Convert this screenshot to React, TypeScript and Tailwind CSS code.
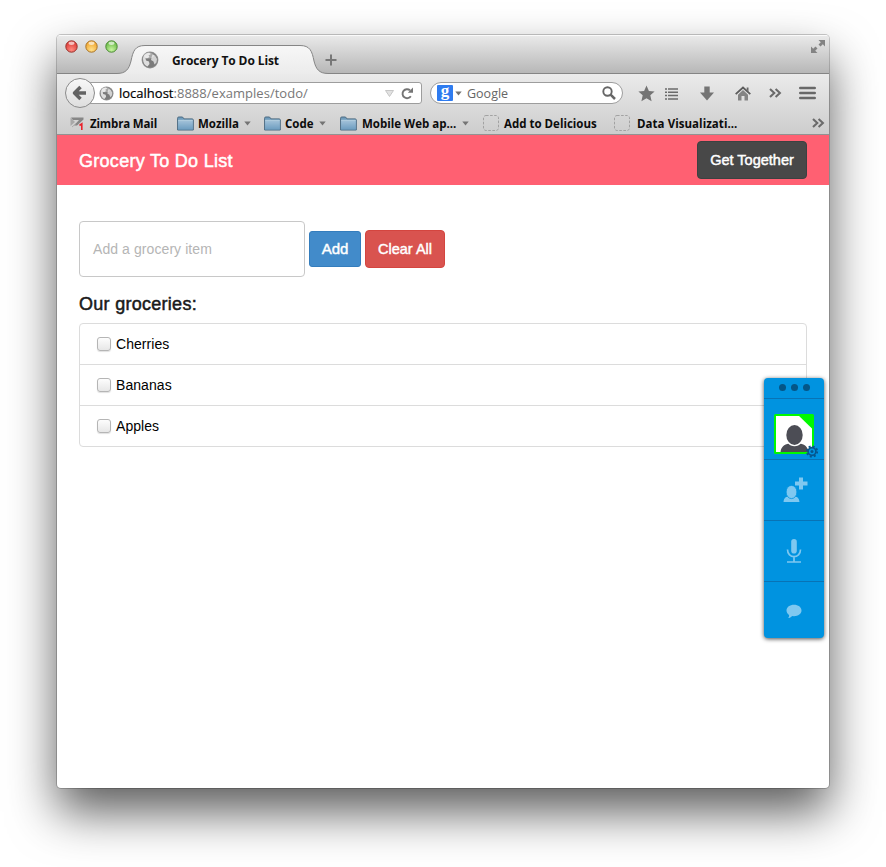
import React from "react";

const chrome = "font-['Open_Sans','Noto_Sans',sans-serif]";

function Globe({ size }: { size: number }) {
  return (
    <svg width={size} height={size} viewBox="0 0 18 18" className="block shrink-0">
      <circle cx="9" cy="9" r="8.400" fill="#8f8f8f" />
      <circle cx="9" cy="9" r="7.400" fill="#7b7b7b" />
      <path d="M2 8 C2 4.500 5 2 8 1.800 L10 3 L7.500 4.500 L8.500 6 L6 7.500 L4.500 7 L5 9.500 L8 10.500 L8.500 13 L6.500 15.500 C4 14.500 2 12 2 8Z" fill="#dedede" />
      <path d="M11.500 3.500 L14 4.500 L16 8 L15.500 11.500 L13.500 13.500 L12.500 10.500 L10 9 L10.500 6.500Z" fill="#d2d2d2" />
      <ellipse cx="8" cy="4.500" rx="5" ry="3" fill="#fff" opacity="0.35" />
    </svg>
  );
}

function Caret({ className = "" }: { className?: string }) {
  return (
    <svg width="7" height="5" viewBox="0 0 7 5" className={`block shrink-0 ${className}`}>
      <path d="M0.300 0.500H6.700L3.500 4.500Z" fill="#747474" />
    </svg>
  );
}

function Folder({ className = "" }: { className?: string }) {
  return (
    <svg width="17" height="15" viewBox="0 0 17 15" className={`block shrink-0 ${className}`}>
      <defs>
        <linearGradient id="folder" x1="0" y1="0" x2="0" y2="1">
          <stop offset="0" stopColor="#a3c2d9" />
          <stop offset="1" stopColor="#6d9dc0" />
        </linearGradient>
      </defs>
      <path d="M0.600 14V2.200Q0.600 1 1.800 1H5.500L7 2.900H15Q16.300 2.900 16.300 4V14Z" fill="#6f9cbc" stroke="#4d6b82" />
      <path d="M1.100 4.500H15.800V13.500H1.100Z" fill="url(#folder)" />
      <path d="M1.100 4.300H15.800" stroke="#b9d2e2" />
    </svg>
  );
}

function Dashed({ className = "" }: { className?: string }) {
  return (
    <svg width="16" height="16" viewBox="0 0 16 16" className={`block shrink-0 ${className}`}>
      <rect x="0.500" y="0.500" width="15" height="15" rx="2.500" fill="none" stroke="#a2a2a2" strokeDasharray="2.600 1.500" />
    </svg>
  );
}

function Chevrons({ className = "" }: { className?: string }) {
  return (
    <svg width="13" height="10" viewBox="0 0 13 10" className={`block shrink-0 ${className}`}>
      <path d="M1 0.900L5.300 5L1 9.100M6.600 0.900L10.900 5L6.600 9.100" fill="none" stroke="#6b6b6b" strokeWidth="2.100" />
    </svg>
  );
}

function Light({ edge, from, to }: { edge: string; from: string; to: string }) {
  const id = "light" + from.slice(1);
  return (
    <svg width="13" height="13" viewBox="0 0 13 13" className="block">
      <defs>
        <radialGradient id={id} cx="0.5" cy="0.8" r="0.7">
          <stop offset="0" stopColor={to} />
          <stop offset="1" stopColor={from} />
        </radialGradient>
      </defs>
      <circle cx="6.500" cy="6.500" r="5.700" fill={`url(#${id})`} stroke={edge} />
      <ellipse cx="6.500" cy="3.300" rx="3" ry="1.700" fill="#fff" opacity="0.65" />
    </svg>
  );
}

function TitleBar() {
  return (
    <div className="flex h-[39px] shrink-0 bg-linear-to-b from-[#e9e9e9] to-[#b6b6b6] border-t border-[#fafafa]">
      <div className="flex gap-[7px] pl-[8px] pt-[4px] w-[65px]">
        <Light edge="#98332e" from="#dc3a36" to="#ff8a80" />
        <Light edge="#a8742a" from="#f0a52e" to="#ffe08a" />
        <Light edge="#4c8a35" from="#68b945" to="#c8f5a0" />
      </div>
      <div className="relative h-[38px] w-[203px]">
        <svg width="772" height="38" viewBox="0 0 772 38" className="absolute -left-[65px] top-0 block">
          <defs>
            <linearGradient id="tab" x1="0" y1="0" x2="0" y2="1">
              <stop offset="0" stopColor="#f7f7f7" />
              <stop offset="1" stopColor="#ebebeb" />
            </linearGradient>
          </defs>
          <path d="M-1 37.500H60C69 37.500 72 33 74 25C76 15 78 9.500 88 9.500H243C253 9.500 255 15 257 25C259 33 262 37.500 271 37.500H773V40H-1Z" fill="url(#tab)" stroke="#858585" />
        </svg>
        <div className="relative flex items-center pl-[19px] pt-[15px]">
          <Globe size={18} />
          <span className={`${chrome} ml-[13px] pt-[2px] text-[12px] leading-[16px] font-bold whitespace-nowrap text-[#111] tracking-[-0.100px]`}>Grocery To Do List</span>
        </div>
      </div>
      <svg width="12" height="12" viewBox="0 0 12 12" className="mt-[18px] block">
        <path d="M6 0.500V11.500M0.500 6H11.500" stroke="#777" strokeWidth="2" />
      </svg>
      <svg width="16" height="15" viewBox="0 0 16 15" className="ml-auto mr-[3px] mt-[3px] block">
        <path d="M8.500 1H15V7.500L12.800 5.300L10.500 7.500L8.500 5.500L10.800 3.200Z M7.500 14H1V7.500L3.200 9.700L5.500 7.500L7.500 9.500L5.200 11.800Z" fill="#838383" />
      </svg>
    </div>
  );
}

function NavRow() {
  return (
    <div className="flex h-[38px] items-center">
      <div className="relative z-10 ml-[8px] flex size-[30px] shrink-0 items-center justify-center rounded-full border border-[#8b8b8b] bg-linear-to-b from-[#f8f8f8] to-[#dedede]">
        <svg width="18" height="18" viewBox="0 0 18 18">
          <path d="M9.500 3L3.500 9L9.500 15M4 9H15" fill="none" stroke="#636363" strokeWidth="3.500" strokeLinejoin="round" />
        </svg>
      </div>
      <div className="-ml-[10px] flex h-[22px] w-[337px] items-center rounded-r-[3px] border border-[#9d9d9d] bg-white pl-[13px]">
        <Globe size={15} />
        <span className={`${chrome} ml-[5px] w-[265px] pt-[1px] text-[13px] leading-[19px] whitespace-nowrap text-[#777]`}>
          <span className="text-black [-webkit-text-stroke:0.200px_black]">localhost</span>
          <span className="tracking-[0.030px]">:8888/examples/todo/</span>
        </span>
        <svg width="9" height="7" viewBox="0 0 9 7" className="ml-auto shrink-0">
          <path d="M0.500 0.500H8.500L4.500 6.500Z" fill="#e2e2e2" stroke="#c6c6c6" />
        </svg>
        <svg width="13" height="13" viewBox="0 0 13 13" className="ml-[7px] mr-[7px] shrink-0">
          <path d="M9.800 9.200A4.500 4.500 0 1 1 9 3.300" fill="none" stroke="#747474" strokeWidth="1.900" />
          <path d="M12 0.500V5.800H6.800Z" fill="#747474" />
        </svg>
      </div>
      <div className="ml-[8px] flex h-[22px] w-[193px] items-center rounded-full border border-[#9d9d9d] bg-white pl-[6px] pr-[6px]">
        <div className="flex size-[16px] shrink-0 items-center justify-center rounded-[1px] bg-[#2f7cf0] pb-[4px] font-['Liberation_Serif',serif] text-[17px] leading-[12px] font-bold text-white">g</div>
        <Caret className="ml-[2px]" />
        <span className={`${chrome} ml-[5px] pt-[1px] text-[12.500px] leading-[19px] text-[#666]`}>Google</span>
        <svg width="14" height="14" viewBox="0 0 14 14" className="ml-auto">
          <circle cx="5.500" cy="5.500" r="4.200" fill="none" stroke="#666" strokeWidth="1.900" />
          <path d="M8.600 8.600L13 13" stroke="#666" strokeWidth="2.500" />
        </svg>
      </div>
      <svg width="17" height="17" viewBox="0 0 17 17" className="ml-[15px] shrink-0">
        <path d="M8.500 0.500L10.900 5.900L16.600 6.500L12.300 10.300L13.600 16.200L8.500 13.200L3.400 16.200L4.700 10.300L0.400 6.500L6.100 5.900Z" fill="#747474" />
      </svg>
      <svg width="13" height="12" viewBox="0 0 13 12" className="ml-[10px] mt-[1px] shrink-0">
        <path d="M0 1H2M3 1H13M0 4.300H2M3 4.300H13M0 7.600H2M3 7.600H13M0 10.900H2M3 10.900H13" stroke="#6b6b6b" strokeWidth="1.500" />
      </svg>
      <svg width="14" height="15" viewBox="0 0 14 15" className="ml-[22px] shrink-0">
        <path d="M4.300 0.500H9.700V6.500H14L7 14.500L0 6.500H4.300Z" fill="#747474" />
      </svg>
      <svg width="16" height="15" viewBox="0 0 16 15" className="ml-[21px] shrink-0">
        <path d="M0.700 8.200L8 1.500L15.300 8.200" fill="none" stroke="#5c5c5c" strokeWidth="1.800" />
        <path d="M11.700 1.500H13.500V5.500L11.700 4Z" fill="#686868" />
        <path d="M8 4L13 8.800V14.500H9.500V10H6.500V14.500H3V8.800Z" fill="#838383" />
      </svg>
      <Chevrons className="ml-[18px]" />
      <svg width="17" height="14" viewBox="0 0 17 14" className="ml-[17px] shrink-0">
        <path d="M1.300 2H15.700M1.300 7H15.700M1.300 12H15.700" stroke="#686868" strokeWidth="2.600" strokeLinecap="round" />
      </svg>
    </div>
  );
}

function Bookmarks() {
  return (
    <div className={`${chrome} flex h-[22px] items-center pl-[13px] text-[11.500px] leading-[17px] font-bold whitespace-nowrap text-[#0c0c0c]`}>
      <svg width="15" height="16" viewBox="0 0 15 16" className="shrink-0">
        <path d="M0.500 2.500V11L5 7Z" fill="#a8a8a8" />
        <path d="M1 2.500H13.500V4.500L7 10.500H4L9 5H3Z" fill="#868686" />
        <path d="M2 12L6 8.500" stroke="#aaa" />
        <path d="M9.500 10.500L11.800 8.800V15" fill="none" stroke="#e9232c" strokeWidth="1.600" />
      </svg>
      <span className="ml-[5px] w-[87px] pt-[1px] tracking-[-0.150px]">Zimbra Mail</span>
      <Folder />
      <span className="ml-[4px] w-[46px] pt-[1px]">Mozilla</span>
      <Caret />
      <Folder className="ml-[13px]" />
      <span className="ml-[4px] w-[34px] pt-[1px]">Code</span>
      <Caret />
      <Folder className="ml-[14px]" />
      <span className="ml-[5px] w-[100px] pt-[1px]">Mobile Web ap...</span>
      <Caret />
      <Dashed className="ml-[14px]" />
      <span className="ml-[5px] w-[110px] pt-[1px]">Add to Delicious</span>
      <Dashed />
      <span className="ml-[7px] pt-[1px] tracking-[0.050px]">Data Visualizati...</span>
      <Chevrons className="ml-auto mr-[4px]" />
    </div>
  );
}

function CollabPanel() {
  return (
    <div className="absolute left-[707px] top-[343px] flex h-[260px] w-[60px] flex-col overflow-hidden rounded-[4px] bg-[#0093e0] shadow-[0_1px_4px_rgba(0,0,0,0.7)]">
      <div className="flex h-[21px] shrink-0 items-center justify-center gap-[5px] border-b border-[#0873b5] pb-[2px]">
        <i className="size-[7px] rounded-full bg-[#045688]" />
        <i className="size-[7px] rounded-full bg-[#045688]" />
        <i className="size-[7px] rounded-full bg-[#045688]" />
      </div>
      <div className="h-[61px] shrink-0 border-b border-[#0873b5] pl-[10px] pt-[15px]">
        <svg width="46" height="45" viewBox="0 0 46 45" className="block">
          <rect x="1" y="1" width="38" height="38" rx="0.500" fill="#fff" stroke="#00f900" strokeWidth="2" />
          <path d="M24 1H39V15.500Z" fill="#00f900" />
          <path d="M6.500 38C7 33 10 30.500 15 29.500L20.500 31L26 29.500C31 30.500 34 33 34.500 38Z" fill="#4c4d55" />
          <ellipse cx="20.500" cy="21" rx="9.500" ry="11.200" fill="#fff" />
          <ellipse cx="20.500" cy="21" rx="8.200" ry="10" fill="#4c4d55" />
          <circle cx="38" cy="37.500" r="3.900" fill="#0093e0" stroke="#06568d" strokeWidth="1.700" />
          <circle cx="38" cy="37.500" r="5.200" fill="none" stroke="#06568d" strokeWidth="1.800" strokeDasharray="2.040 2.040" />
          <circle cx="38" cy="37.500" r="1.500" fill="#06568d" />
        </svg>
      </div>
      <div className="flex h-[61px] shrink-0 items-center justify-center border-b border-[#0873b5] pl-[3px]">
        <svg width="26" height="28" viewBox="0 0 26 28">
          <path d="M16 1.500H20V5.500H24.500V9.500H20V13.500H16V9.500H12V5.500H16Z" fill="#7fc8f0" />
          <path d="M0.500 26C1 21.500 3 21 4.700 20.500Q8.500 23.500 12.300 20.500C14 21 16 21.500 16.500 26Z" fill="#7fc8f0" />
          <ellipse cx="8.500" cy="16" rx="5.400" ry="6.600" fill="#7fc8f0" stroke="#0093e0" strokeWidth="0.800" />
        </svg>
      </div>
      <div className="flex h-[61px] shrink-0 items-center justify-center border-b border-[#0873b5]">
        <svg width="16" height="26" viewBox="0 0 16 26">
          <rect x="5.200" y="1" width="5.600" height="14.500" rx="2.800" fill="#7fc8f0" />
          <path d="M1.500 11.500C1.500 21 14.500 21 14.500 11.500M8 18.500V23.500M1 24H15" fill="none" stroke="#7fc8f0" strokeWidth="1.700" />
        </svg>
      </div>
      <div className="flex h-[58px] shrink-0 items-center justify-center">
        <svg width="16" height="15" viewBox="0 0 16 15">
          <path d="M8 0.800C12.200 0.800 15.500 3.200 15.500 6.500S12.200 12.200 8 12.200L6 12C5 13.500 3.500 14 2.200 14C3 13 3.300 12 3 10.900C1.500 9.900 0.500 8.300 0.500 6.500C0.500 3.200 3.800 0.800 8 0.800Z" fill="#7fc8f0" />
        </svg>
      </div>
    </div>
  );
}

const groceries = ["Cherries", "Bananas", "Apples"];

export default function App() {
  return (
    <div className="h-[867px] w-[886px] overflow-hidden bg-white pl-[57px] pt-[35px] font-['Liberation_Sans',Arial,sans-serif]">
      <div className="relative flex h-[753px] w-[772px] flex-col rounded-[4px] bg-white shadow-[0_0_0_1px_rgba(0,0,0,0.2),0_24px_48px_rgba(0,0,0,0.64)]">
        <div className="flex h-[100px] shrink-0 flex-col overflow-hidden rounded-t-[4px]">
          <TitleBar />
          <div className="h-[61px] border-b border-[#929292] bg-linear-to-b from-[#ebebeb] to-[#cdcdcd]">
            <NavRow />
            <Bookmarks />
          </div>
        </div>
        <header className="flex h-[50px] shrink-0 items-center justify-between bg-[#ff6072] px-[22px]">
          <h1 className="pt-[2px] text-[18px] leading-[20px] tracking-[0.280px] text-white [-webkit-text-stroke:0.500px_white]">Grocery To Do List</h1>
          <button className="h-[38px] w-[110px] rounded-[4px] border border-[#3c4141] bg-[#484848] pt-[2px] text-[14.500px] whitespace-nowrap text-white [-webkit-text-stroke:0.450px_white]">Get Together</button>
        </header>
        <main className="px-[22px] pt-[36px]">
          <div className="flex items-center">
            <div className="flex h-[56px] w-[226px] items-center rounded-[4px] border border-[#c8c8c8] pl-[13px] pt-[1px] text-[14px] tracking-[0.080px] text-[#b5b5b5]">Add a grocery item</div>
            <button className="ml-[4px] h-[36px] w-[52px] rounded-[3px] border border-[#347dbd] bg-[#428bca] text-[15px] text-white [-webkit-text-stroke:0.450px_white]">Add</button>
            <button className="ml-[4px] h-[38px] w-[80px] rounded-[4px] border border-[#d4453f] bg-[#d9534f] pt-[2px] text-[14.500px] whitespace-nowrap text-white [-webkit-text-stroke:0.450px_white]">Clear All</button>
          </div>
          <h2 className="mt-[17px] text-[18px] leading-[20px] tracking-[0.280px] text-[#1a1a1a] [-webkit-text-stroke:0.500px_#1a1a1a]">Our groceries:</h2>
          <ul className="mt-[9px] rounded-[4px] border border-[#dcdcdc]">
            {groceries.map((name) => (
              <li key={name} className="flex h-[41px] items-center border-b border-[#dcdcdc] pl-[17px] last:h-[40px] last:border-b-0">
                <span className="-mt-px size-[14px] rounded-[3px] border border-[#b5b5b5] bg-linear-to-b from-[#fdfdfd] to-[#e7e7e7] shadow-[0_1px_1px_rgba(0,0,0,0.12)]" />
                <span className="ml-[5px] pt-px text-[14px] tracking-[0.060px] text-black">{name}</span>
              </li>
            ))}
          </ul>
        </main>
        <CollabPanel />
      </div>
    </div>
  );
}
